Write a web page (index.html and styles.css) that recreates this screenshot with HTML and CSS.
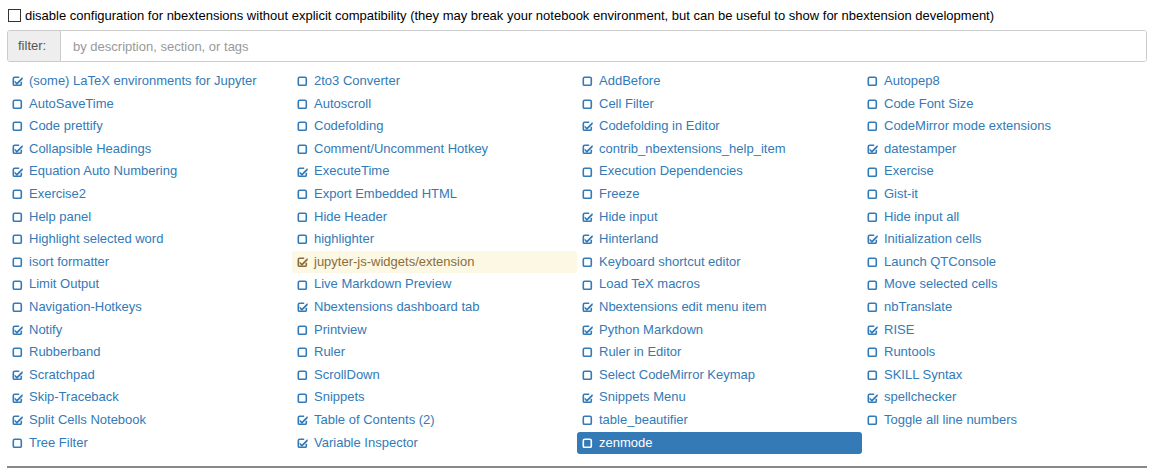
FILE: index.html
```html
<!DOCTYPE html>
<html>
<head>
<meta charset="utf-8">
<link rel="stylesheet" href="styles.css">
</head>
<body>
<div class="page">
  <label class="compat">
    <span class="native-box"></span>
    <span>disable configuration for nbextensions without explicit compatibility (they may break your notebook environment, but can be useful to show for nbextension development)</span>
  </label>

  <div class="filter-group">
    <span class="filter-addon">filter:</span>
    <input class="filter-input" type="text" placeholder="by description, section, or tags">
  </div>

  <ul class="ext-list">
    <li class="ext on"><svg class="ico"><use href="#chk"/></svg>(some) LaTeX environments for Jupyter</li>
    <li class="ext"><svg class="ico"><use href="#sq"/></svg>AutoSaveTime</li>
    <li class="ext"><svg class="ico"><use href="#sq"/></svg>Code prettify</li>
    <li class="ext on"><svg class="ico"><use href="#chk"/></svg>Collapsible Headings</li>
    <li class="ext on"><svg class="ico"><use href="#chk"/></svg>Equation Auto Numbering</li>
    <li class="ext"><svg class="ico"><use href="#sq"/></svg>Exercise2</li>
    <li class="ext"><svg class="ico"><use href="#sq"/></svg>Help panel</li>
    <li class="ext"><svg class="ico"><use href="#sq"/></svg>Highlight selected word</li>
    <li class="ext"><svg class="ico"><use href="#sq"/></svg>isort formatter</li>
    <li class="ext"><svg class="ico"><use href="#sq"/></svg>Limit Output</li>
    <li class="ext"><svg class="ico"><use href="#sq"/></svg>Navigation-Hotkeys</li>
    <li class="ext on"><svg class="ico"><use href="#chk"/></svg>Notify</li>
    <li class="ext"><svg class="ico"><use href="#sq"/></svg>Rubberband</li>
    <li class="ext on"><svg class="ico"><use href="#chk"/></svg>Scratchpad</li>
    <li class="ext on"><svg class="ico"><use href="#chk"/></svg>Skip-Traceback</li>
    <li class="ext on"><svg class="ico"><use href="#chk"/></svg>Split Cells Notebook</li>
    <li class="ext"><svg class="ico"><use href="#sq"/></svg>Tree Filter</li>

    <li class="ext"><svg class="ico"><use href="#sq"/></svg>2to3 Converter</li>
    <li class="ext"><svg class="ico"><use href="#sq"/></svg>Autoscroll</li>
    <li class="ext"><svg class="ico"><use href="#sq"/></svg>Codefolding</li>
    <li class="ext"><svg class="ico"><use href="#sq"/></svg>Comment/Uncomment Hotkey</li>
    <li class="ext on"><svg class="ico"><use href="#chk"/></svg>ExecuteTime</li>
    <li class="ext"><svg class="ico"><use href="#sq"/></svg>Export Embedded HTML</li>
    <li class="ext"><svg class="ico"><use href="#sq"/></svg>Hide Header</li>
    <li class="ext"><svg class="ico"><use href="#sq"/></svg>highlighter</li>
    <li class="ext on warn"><svg class="ico"><use href="#chk"/></svg>jupyter-js-widgets/extension</li>
    <li class="ext"><svg class="ico"><use href="#sq"/></svg>Live Markdown Preview</li>
    <li class="ext on"><svg class="ico"><use href="#chk"/></svg>Nbextensions dashboard tab</li>
    <li class="ext"><svg class="ico"><use href="#sq"/></svg>Printview</li>
    <li class="ext"><svg class="ico"><use href="#sq"/></svg>Ruler</li>
    <li class="ext"><svg class="ico"><use href="#sq"/></svg>ScrollDown</li>
    <li class="ext"><svg class="ico"><use href="#sq"/></svg>Snippets</li>
    <li class="ext on"><svg class="ico"><use href="#chk"/></svg>Table of Contents (2)</li>
    <li class="ext on"><svg class="ico"><use href="#chk"/></svg>Variable Inspector</li>

    <li class="ext"><svg class="ico"><use href="#sq"/></svg>AddBefore</li>
    <li class="ext"><svg class="ico"><use href="#sq"/></svg>Cell Filter</li>
    <li class="ext on"><svg class="ico"><use href="#chk"/></svg>Codefolding in Editor</li>
    <li class="ext on"><svg class="ico"><use href="#chk"/></svg>contrib_nbextensions_help_item</li>
    <li class="ext"><svg class="ico"><use href="#sq"/></svg>Execution Dependencies</li>
    <li class="ext"><svg class="ico"><use href="#sq"/></svg>Freeze</li>
    <li class="ext on"><svg class="ico"><use href="#chk"/></svg>Hide input</li>
    <li class="ext on"><svg class="ico"><use href="#chk"/></svg>Hinterland</li>
    <li class="ext"><svg class="ico"><use href="#sq"/></svg>Keyboard shortcut editor</li>
    <li class="ext"><svg class="ico"><use href="#sq"/></svg>Load TeX macros</li>
    <li class="ext on"><svg class="ico"><use href="#chk"/></svg>Nbextensions edit menu item</li>
    <li class="ext on"><svg class="ico"><use href="#chk"/></svg>Python Markdown</li>
    <li class="ext"><svg class="ico"><use href="#sq"/></svg>Ruler in Editor</li>
    <li class="ext"><svg class="ico"><use href="#sq"/></svg>Select CodeMirror Keymap</li>
    <li class="ext on"><svg class="ico"><use href="#chk"/></svg>Snippets Menu</li>
    <li class="ext"><svg class="ico"><use href="#sq"/></svg>table_beautifier</li>
    <li class="ext active"><svg class="ico"><use href="#sq"/></svg>zenmode</li>

    <li class="ext"><svg class="ico"><use href="#sq"/></svg>Autopep8</li>
    <li class="ext"><svg class="ico"><use href="#sq"/></svg>Code Font Size</li>
    <li class="ext"><svg class="ico"><use href="#sq"/></svg>CodeMirror mode extensions</li>
    <li class="ext on"><svg class="ico"><use href="#chk"/></svg>datestamper</li>
    <li class="ext"><svg class="ico"><use href="#sq"/></svg>Exercise</li>
    <li class="ext"><svg class="ico"><use href="#sq"/></svg>Gist-it</li>
    <li class="ext"><svg class="ico"><use href="#sq"/></svg>Hide input all</li>
    <li class="ext on"><svg class="ico"><use href="#chk"/></svg>Initialization cells</li>
    <li class="ext"><svg class="ico"><use href="#sq"/></svg>Launch QTConsole</li>
    <li class="ext"><svg class="ico"><use href="#sq"/></svg>Move selected cells</li>
    <li class="ext"><svg class="ico"><use href="#sq"/></svg>nbTranslate</li>
    <li class="ext on"><svg class="ico"><use href="#chk"/></svg>RISE</li>
    <li class="ext"><svg class="ico"><use href="#sq"/></svg>Runtools</li>
    <li class="ext"><svg class="ico"><use href="#sq"/></svg>SKILL Syntax</li>
    <li class="ext on"><svg class="ico"><use href="#chk"/></svg>spellchecker</li>
    <li class="ext"><svg class="ico"><use href="#sq"/></svg>Toggle all line numbers</li>
  </ul>

  <div class="rule"></div>
</div>

<svg class="defs" width="0" height="0">
  <defs>
    <g id="sq">
      <rect x="1.3" y="2.3" width="8" height="8" rx="1.4" fill="none" stroke="currentColor" stroke-width="1.6"/>
    </g>
    <g id="chk">
      <path d="M7.2 2.3 H2.7 Q1.3 2.3 1.3 3.7 V8.9 Q1.3 10.3 2.7 10.3 H7.9 Q9.3 10.3 9.3 8.9 V6.8" fill="none" stroke="currentColor" stroke-width="1.6"/>
      <path d="M2.6 5.4 L4.9 7.6 L10.3 1.9 L10.9 3.9 L4.9 10 L2.6 7.6 Z" fill="currentColor"/>
    </g>
  </defs>
</svg>
</body>
</html>
```

FILE: styles.css
```css
* { box-sizing: border-box; }

html, body {
  margin: 0;
  padding: 0;
  background: #fff;
}

body {
  font-family: "Liberation Sans", Arial, sans-serif;
  font-size: 13px;
  line-height: 18.57px;
  color: #000;
}

.page {
  padding: 6px 11px 0 7px;
}

.compat {
  display: flex;
  align-items: center;
  gap: 4px;
  height: 20px;
  margin-left: 1px;
}

.native-box {
  width: 13px;
  height: 13px;
  border: 1px solid #333;
  background: #fff;
  flex: none;
  margin-top: -2px;
}

.filter-group {
  display: flex;
  height: 32px;
  margin-top: 4px;
  border: 1px solid #ccc;
  border-radius: 3px;
  overflow: hidden;
}

.filter-addon {
  display: flex;
  align-items: center;
  width: 53px;
  padding: 0 0 0 10px;
  background: #eee;
  color: #555;
  border-right: 1px solid #ccc;
}

.filter-input {
  flex: 1;
  border: 0;
  outline: none;
  padding: 0 12px;
  font-family: inherit;
  font-size: 13px;
  color: #555;
  background: #fff;
}

.filter-input::placeholder {
  color: #999;
}

.ext-list {
  list-style: none;
  margin: 8px 0 0;
  padding: 0;
  display: grid;
  grid-template-columns: repeat(4, 285px);
  grid-template-rows: repeat(17, 22.6px);
  grid-auto-flow: column;
}

.ext {
  display: flex;
  align-items: center;
  padding: 0 5px;
  color: #337ab7;
  white-space: nowrap;
  border-radius: 3px;
}

.ico {
  width: 11px;
  height: 11px;
  flex: none;
  margin-right: 6px;
  margin-top: -1px;
  color: #337ab7;
}

.ext.warn {
  background: #fcf8e3;
  color: #8a6d3b;
}

.ext.warn .ico {
  color: #8a6d3b;
}

.ext.active {
  background: #337ab7;
  color: #fff;
}

.ext.active .ico {
  color: #fff;
}

.rule {
  height: 2px;
  background: #888;
  margin-top: 12px;
  width: 1140px;
}

.defs {
  position: absolute;
  width: 0;
  height: 0;
}
```
